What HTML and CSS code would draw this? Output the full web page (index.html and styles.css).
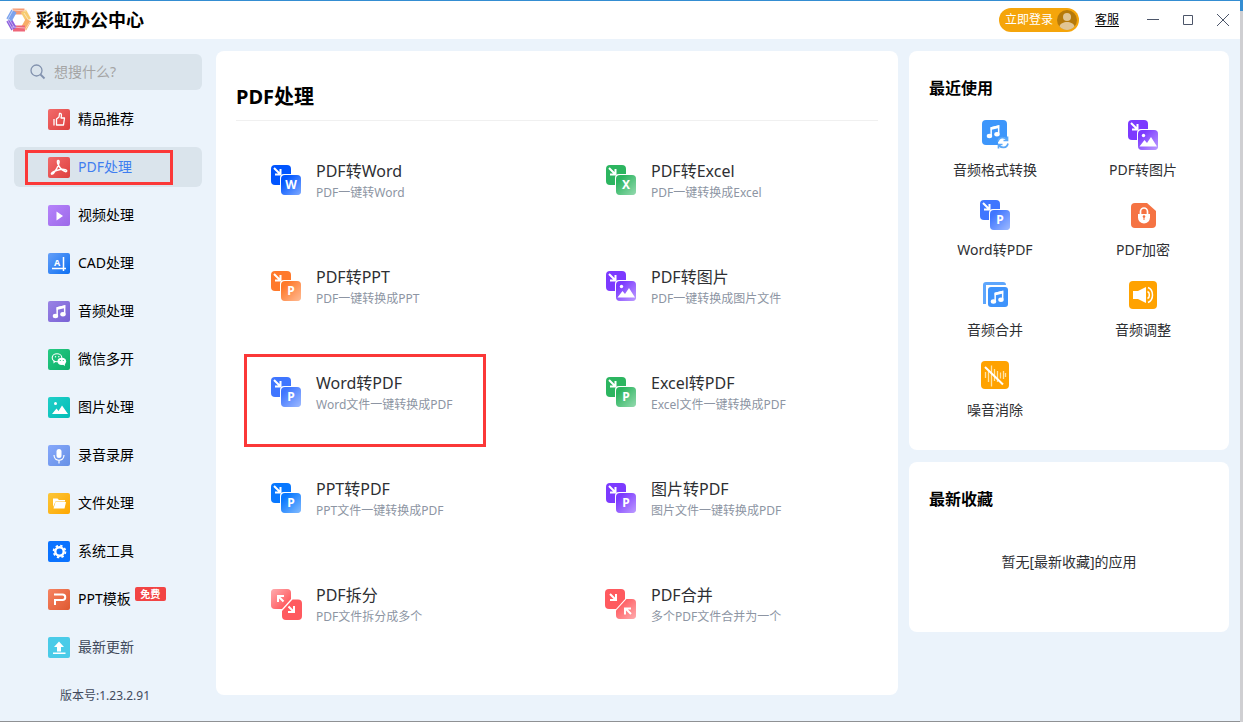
FILE: index.html
```html
<!DOCTYPE html>
<html lang="zh-CN">
<head>
    <meta charset="UTF-8">
    <title>彩虹办公中心</title>
    <link rel="stylesheet" href="styles.css">
</head>
<body>

<!-- shared icon parts -->
<svg class="defs" width="0" height="0">
    <defs>
        <linearGradient id="shine" x1="0" y1="0" x2="1" y2="1">
            <stop offset="0.2" stop-color="#fff" stop-opacity="0"/>
            <stop offset="1" stop-color="#fff" stop-opacity="0.5"/>
        </linearGradient>
        <linearGradient id="shine-back" x1="1" y1="1" x2="0" y2="0">
            <stop offset="0.2" stop-color="#fff" stop-opacity="0"/>
            <stop offset="1" stop-color="#fff" stop-opacity="0.5"/>
        </linearGradient>
        <symbol id="convert" viewBox="0 0 30 30">
            <rect width="20" height="20" rx="4" fill="currentColor"/>
            <path d="M3 3l6 6M9.500 4v5.500H4" fill="none" stroke="#fff" stroke-width="2"/>
            <rect x="9" y="9" width="22" height="22" rx="4" fill="#fff"/>
            <rect x="10" y="10" width="20" height="20" rx="4" fill="currentColor"/>
            <rect x="10" y="10" width="20" height="20" rx="4" fill="url(#shine)"/>
        </symbol>
        <symbol id="picture" viewBox="0 0 30 30">
            <circle cx="15.500" cy="15.500" r="1.700" fill="#fff"/>
            <path d="M11.500 26.500l5-6.500 2.500 3 4-6 6 9.500z" fill="#fff"/>
        </symbol>
        <symbol id="note" viewBox="0 0 16 16">
            <path d="M5.500 12V4l8-2v8.500" fill="none" stroke="#fff" stroke-width="1.600"/>
            <path d="M5 3.500l9-2.300v3L5 6.400z" fill="#fff"/>
            <ellipse cx="3.700" cy="12.700" rx="2.900" ry="2.400" fill="#fff"/>
            <ellipse cx="11.700" cy="11" rx="2.900" ry="2.400" fill="#fff"/>
        </symbol>
    </defs>
</svg>

<div class="window">
    <header class="titlebar">
        <svg class="logo" width="26" height="24" viewBox="0 0 26 24" fill="none" stroke-width="6">
            <path d="M6.500 3.500h12" stroke="#f49a72"/>
            <path d="M17.500 3l5 9" stroke="#f7cb70"/>
            <path d="M22.500 12l-5 9" stroke="#f8ad68"/>
            <path d="M19 20.500H7" stroke="#ee6678"/>
            <path d="M8 21l-5-9" stroke="#8d5fdd"/>
            <path d="M3 12l5-9" stroke="#7ba2ed"/>
            <path d="M6 2l14 1M20.500 2l5 9M18 5l4.500 7M24 14l-5 8M6 19l13 1M2 13l5 9M3 11l5 8M7 2l-5 9" stroke="#fff" stroke-width="0.500"/>
        </svg>
        <h1>彩虹办公中心</h1>
        <button class="login">立即登录
            <svg width="20" height="20" viewBox="0 0 20 20">
                <circle cx="10" cy="10" r="10" fill="#b67a0b"/>
                <circle cx="10" cy="7" r="4" fill="#e1c594"/>
                <path d="M2.500 16.500C3.500 10.500 16.500 10.500 17.500 16.500A10 10 0 0 1 2.500 16.500z" fill="#e1c594"/>
            </svg>
        </button>
        <a class="service" href="#">客服</a>
        <div class="controls">
            <button aria-label="最小化"><svg width="14" height="14" viewBox="0 0 14 14"><path d="M1 6.500h12"/></svg></button>
            <button aria-label="最大化"><svg width="14" height="14" viewBox="0 0 14 14"><path d="M2.500 2.500h9v9h-9z"/></svg></button>
            <button aria-label="关闭"><svg width="14" height="14" viewBox="0 0 14 14"><path d="M1 1l12 12M13 1L1 13"/></svg></button>
        </div>
    </header>

    <div class="content">
        <aside class="sidebar">
            <label class="search">
                <svg width="16" height="16" viewBox="0 0 16 16" fill="none" stroke="#8292ae" stroke-width="1.300">
                    <circle cx="6.500" cy="6.500" r="5.500"/>
                    <path d="M10.500 10.500l4 4" stroke-width="1.800"/>
                </svg>
                <input type="text" placeholder="想搜什么?" aria-label="搜索">
            </label>

            <nav>
                <a href="#">
                    <svg class="red" viewBox="0 0 22 21"><path d="M6 10v6.500M8.500 16V10l2.500-2 .500-3.500c1.800-.500 2.500 1 1.500 4.500h3.500l-1 7H8.500z" fill="none" stroke="#fff" stroke-width="1.300" stroke-linejoin="round"/></svg>
                    精品推荐
                </a>
                <a href="#" class="active marked">
                    <svg class="red" viewBox="0 0 22 21"><path d="M10 3.500c2-.5 1 4-1 7.500S4.500 18 3.500 17c-1-1.500 5-4 9-4.500s7 .5 6 1.800c-1 1.200-5-1.300-7-4.300s-2.800-6-1.500-6.500z" fill="none" stroke="#fff" stroke-width="1.500"/></svg>
                    PDF处理
                </a>
                <a href="#">
                    <svg class="violet" viewBox="0 0 22 21"><path d="M8.500 6.500v9l6.500-4.500z" fill="#fff"/></svg>
                    视频处理
                </a>
                <a href="#">
                    <svg class="blue" viewBox="0 0 22 21"><path d="M15.500 4v14M4 15.500h14" fill="none" stroke="#fff" stroke-width="1.500"/><text class="letter" x="9" y="13">A</text></svg>
                    CAD处理
                </a>
                <a href="#">
                    <svg class="purple" viewBox="0 0 22 21"><use href="#note" x="4" y="3" width="15" height="15"/></svg>
                    音频处理
                </a>
                <a href="#">
                    <svg class="green" viewBox="0 0 22 21">
                        <ellipse cx="9" cy="8.800" rx="4.800" ry="4" fill="none" stroke="#fff" stroke-width="1.100"/>
                        <path d="M5.500 11.500v3l2.500-2z" fill="#fff"/>
                        <circle cx="7.500" cy="7.800" r=".7" fill="#fff"/><circle cx="10.800" cy="7.800" r=".7" fill="#fff"/>
                        <ellipse cx="13.800" cy="12.300" rx="4.300" ry="3.600" fill="#fff"/>
                        <path d="M14 15l3 2-.3-3z" fill="#fff"/>
                        <circle cx="12.300" cy="11.500" r=".6" fill="#18b974"/><circle cx="15.300" cy="11.500" r=".6" fill="#18b974"/>
                    </svg>
                    微信多开
                </a>
                <a href="#">
                    <svg class="teal" viewBox="0 0 22 21"><circle cx="7.500" cy="6.500" r="1.500" fill="#fff"/><path d="M4 17l4.500-5.500 2 2.500 3.500-5.500L20 17z" fill="#fff"/></svg>
                    图片处理
                </a>
                <a href="#">
                    <svg class="periwinkle" viewBox="0 0 22 21"><rect x="8.500" y="4" width="5" height="9" rx="2.500" fill="#fff"/><path d="M6 10c0 7 10 7 10 0M11 15v3.500" fill="none" stroke="#fff" stroke-width="1.200"/></svg>
                    录音录屏
                </a>
                <a href="#">
                    <svg class="yellow" viewBox="0 0 22 21"><path d="M5 14V5.500h4.500l1.500 1.500h6v1.500H7.500z" fill="#fff"/><path d="M7.500 9H18l-1.500 6.500H5.500z" fill="#fff"/></svg>
                    文件处理
                </a>
                <a href="#">
                    <svg class="royal" viewBox="0 0 22 21"><circle cx="11.500" cy="10.500" r="4.200" fill="none" stroke="#fff" stroke-width="2.400"/><circle cx="11.500" cy="10.500" r="5.900" fill="none" stroke="#fff" stroke-width="1.800" stroke-dasharray="2.400 2.230"/></svg>
                    系统工具
                </a>
                <a href="#">
                    <svg class="orange" viewBox="0 0 22 21"><path d="M6 5.500h8.500a2.500 2.500 0 0 1 0 5.500H7v5" fill="none" stroke="#fff" stroke-width="2"/></svg>
                    PPT模板
                    <span class="free">免费</span>
                </a>
                <a href="#" class="update">
                    <svg class="cyan" viewBox="0 0 22 21"><path d="M11 4.500l5 5.500h-3v4.500H9V10H6zM5 15.500h12.500V17H5z" fill="#fff"/></svg>
                    最新更新
                </a>
            </nav>
            <p class="version">版本号:1.23.2.91</p>
        </aside>

        <main class="panel">
            <h2>PDF处理</h2>
            <div class="tools">
                <a href="#" class="tool">
                    <svg viewBox="0 0 30 30" color="#0055ff"><use href="#convert"/><text x="20" y="24">W</text></svg>
                    <div><h3>PDF转Word</h3><p>PDF一键转Word</p></div>
                </a>
                <a href="#" class="tool">
                    <svg viewBox="0 0 30 30" color="#2cb560"><use href="#convert"/><text x="20" y="24">X</text></svg>
                    <div><h3>PDF转Excel</h3><p>PDF一键转换成Excel</p></div>
                </a>
                <a href="#" class="tool">
                    <svg viewBox="0 0 30 30" color="#ff792b"><use href="#convert"/><text x="20" y="24">P</text></svg>
                    <div><h3>PDF转PPT</h3><p>PDF一键转换成PPT</p></div>
                </a>
                <a href="#" class="tool">
                    <svg viewBox="0 0 30 30" color="#7c3aff"><use href="#convert"/><use href="#picture"/></svg>
                    <div><h3>PDF转图片</h3><p>PDF一键转换成图片文件</p></div>
                </a>
                <a href="#" class="tool marked">
                    <svg viewBox="0 0 30 30" color="#3f76ff"><use href="#convert"/><text x="20" y="24">P</text></svg>
                    <div><h3>Word转PDF</h3><p>Word文件一键转换成PDF</p></div>
                </a>
                <a href="#" class="tool">
                    <svg viewBox="0 0 30 30" color="#2cb560"><use href="#convert"/><text x="20" y="24">P</text></svg>
                    <div><h3>Excel转PDF</h3><p>Excel文件一键转换成PDF</p></div>
                </a>
                <a href="#" class="tool">
                    <svg viewBox="0 0 30 30" color="#0878ff"><use href="#convert"/><text x="20" y="24">P</text></svg>
                    <div><h3>PPT转PDF</h3><p>PPT文件一键转换成PDF</p></div>
                </a>
                <a href="#" class="tool">
                    <svg viewBox="0 0 30 30" color="#7c3aff"><use href="#convert"/><text x="20" y="24">P</text></svg>
                    <div><h3>图片转PDF</h3><p>图片文件一键转换成PDF</p></div>
                </a>
                <a href="#" class="tool">
                    <svg viewBox="0 0 30 30" color="#ff5a5f">
                        <path d="M4 0h12a4 4 0 0 1 4 4v6l-9 10H4a4 4 0 0 1-4-4V4a4 4 0 0 1 4-4z" fill="currentColor"/>
                        <path d="M4 0h12a4 4 0 0 1 4 4v6l-9 10H4a4 4 0 0 1-4-4V4a4 4 0 0 1 4-4z" fill="url(#shine-back)"/>
                        <path d="M21.500 10.500H27a4 4 0 0 1 4 4V27a4 4 0 0 1-4 4H15a4 4 0 0 1-4-4v-5z" fill="currentColor"/>
                        <path d="M12.500 12.500l-5-5M7 13V7h6M17.500 17.500l5 5M23 17v6h-6" fill="none" stroke="#fff" stroke-width="2"/>
                    </svg>
                    <div><h3>PDF拆分</h3><p>PDF文件拆分成多个</p></div>
                </a>
                <a href="#" class="tool">
                    <svg viewBox="0 0 30 30" color="#ff5a5f">
                        <path d="M3 0h12a4 4 0 0 1 4 4v6l-9 10H3a4 4 0 0 1-4-4V4a4 4 0 0 1 4-4z" fill="currentColor"/>
                        <path d="M20.500 10H26a4 4 0 0 1 4 4v12a4 4 0 0 1-4 4H14a4 4 0 0 1-4-4v-4.500z" fill="currentColor"/>
                        <path d="M20.500 10H26a4 4 0 0 1 4 4v12a4 4 0 0 1-4 4H14a4 4 0 0 1-4-4v-4.500z" fill="url(#shine)"/>
                        <path d="M4 5l5 5M10 5v6H4M25 25l-5-5M19 25.500v-6h6" fill="none" stroke="#fff" stroke-width="2"/>
                    </svg>
                    <div><h3>PDF合并</h3><p>多个PDF文件合并为一个</p></div>
                </a>
            </div>
        </main>

        <aside class="side">
            <section class="panel recent">
                <h2>最近使用</h2>
                <div class="apps">
                    <a href="#">
                        <svg viewBox="0 0 30 30">
                            <rect x="2" y="0" width="25" height="25" rx="4" fill="#3d96fb"/>
                            <use href="#note" x="6" y="4" width="15" height="15"/>
                            <circle cx="23" cy="22.500" r="5" fill="#fff"/>
                            <path d="M18 21.500c1-5 7-5 9-1.500M28 23.500c-1 5-7 5-9 1.500M27.500 16.500V20.500h-4M18.500 28.500v-4h4" fill="none" stroke="#5ba8f8" stroke-width="1.700"/>
                        </svg>
                        音频格式转换
                    </a>
                    <a href="#">
                        <svg viewBox="0 0 30 30" color="#7c3aff"><use href="#convert"/><use href="#picture"/></svg>
                        PDF转图片
                    </a>
                    <a href="#">
                        <svg viewBox="0 0 30 30" color="#3f76ff"><use href="#convert"/><text x="20" y="24">P</text></svg>
                        Word转PDF
                    </a>
                    <a href="#">
                        <svg viewBox="0 0 30 30">
                            <path d="M7 3h12l9 8v13a4 4 0 0 1-4 4H7a4 4 0 0 1-4-4V7a4 4 0 0 1 4-4z" fill="#f57343"/>
                            <path d="M12.500 14v-2.500a3.500 3.500 0 0 1 7 0V14" fill="none" stroke="#fff" stroke-width="1.700"/>
                            <path d="M10 14h12v3.500a6 6 0 0 1-12 0z" fill="#fff"/>
                            <circle cx="16" cy="16.500" r="1.300" fill="#f57343"/><path d="M15.500 17h1v3h-1z" fill="#f57343"/>
                        </svg>
                        PDF加密
                    </a>
                    <a href="#">
                        <svg viewBox="0 0 30 30">
                            <path d="M3 24V5a3 3 0 0 1 3-3h17a3 3 0 0 1 3 3H6v19z" fill="#5ea6fc"/>
                            <rect x="8" y="7" width="20" height="20" rx="3" fill="#3e93fb"/>
                            <use href="#note" x="10" y="9.500" width="15" height="15"/>
                        </svg>
                        音频合并
                    </a>
                    <a href="#">
                        <svg viewBox="0 0 30 30">
                            <rect x="1" y="1" width="28" height="28" rx="4" fill="#ffa200"/>
                            <path d="M5 11h5l8-4v16l-8-4H5z" fill="#fff"/>
                            <path d="M19.500 11.500c2.500 1 2.500 6 0 7" fill="none" stroke="#fff" stroke-width="1.500"/>
                            <path d="M20 7.500c6 2.500 6 12.500 0 15" fill="none" stroke="#fff" stroke-width="1.500"/>
                        </svg>
                        音频调整
                    </a>
                    <a href="#">
                        <svg viewBox="0 0 30 30">
                            <rect x="1" y="1" width="28" height="28" rx="4" fill="#ffa200"/>
                            <path d="M5.500 12v6M8.500 10v12M11.500 5.500v21M14.500 9v12M17.500 11v11M20.500 12.500v6M23.500 11v8M25.500 13v4" fill="none" stroke="#ffe3a6" stroke-width="1.300"/>
                            <path d="M5 7l18 17.500" stroke="#fff" stroke-width="2"/>
                        </svg>
                        噪音消除
                    </a>
                </div>
            </section>

            <section class="panel favorites">
                <h2>最新收藏</h2>
                <p>暂无[最新收藏]的应用</p>
            </section>
        </aside>
    </div>
</div>

</body>
</html>
```
FILE: styles.css
```css
* {
    box-sizing: border-box;
}

body {
    margin: 0;
    padding-right: 3px;
    background: #cfcfd2 linear-gradient(#348dd2 11px, #cfcfd2 11px) no-repeat;
    font-family: "Noto Sans", "Noto Sans CJK SC", sans-serif;
    font-size: 14px;
    line-height: 20px;
    color: #000;
}

h1, h2, h3, p {
    margin: 0;
}

a {
    color: inherit;
    text-decoration: none;
}

button {
    padding: 0;
    border: 0;
    background: none;
    font: inherit;
    cursor: pointer;
}

svg {
    flex: none;
    overflow: visible;
}

svg text {
    fill: #fff;
    font-size: 12px;
    font-weight: bold;
    text-anchor: middle;
}

svg .letter {
    font-size: 9px;
}

.defs {
    position: absolute;
}

.window {
    min-height: 100vh;
    border-top: 1px solid #348dd2;
    border-bottom: 1px solid #8f9194;
    background-color: #ebf3fb;
}

/* title bar */
.titlebar {
    display: flex;
    align-items: center;
    height: 38px;
    padding: 0 10px 0 6px;
    background-color: #fff;
}

.titlebar h1 {
    margin: 0 auto 0 4px;
    font-size: 18px;
    line-height: 24px;
}

.login {
    display: flex;
    align-items: center;
    justify-content: space-between;
    width: 80px;
    height: 24px;
    padding: 0 2px 0 6px;
    border-radius: 12px;
    background-color: #f5a50b;
    color: #fff;
    font-size: 12px;
}

.service {
    margin: 0 27px 0 16px;
    font-size: 12px;
    text-decoration: underline;
    text-underline-offset: 2px;
}

.controls {
    display: flex;
    gap: 21px;
}

.controls button {
    display: flex;
}

.controls path {
    fill: none;
    stroke: #4c5569;
}

/* columns */
.content {
    display: flex;
    align-items: flex-start;
    padding: 12px 11px 0 14px;
}

.sidebar {
    width: 188px;
    margin: 3px 14px 0 0;
}

.search {
    display: flex;
    align-items: center;
    gap: 8px;
    height: 36px;
    margin-bottom: 9px;
    padding: 0 16px;
    border-radius: 6px;
    background-color: #dae4ec;
}

.search input {
    flex: 1;
    min-width: 0;
    padding: 0;
    border: 0;
    outline: 0;
    background: none;
    font: inherit;
}

.search input::placeholder {
    color: #a5a5a5;
}

nav {
    display: flex;
    flex-direction: column;
    gap: 8px;
}

nav a {
    display: flex;
    align-items: center;
    position: relative;
    height: 40px;
    padding-left: 34px;
    border-radius: 6px;
    line-height: 22px;
}

nav svg {
    width: 22px;
    height: 21px;
    margin-right: 8px;
    border-radius: 2px;
}

nav .active {
    background-color: #dae4ec;
    color: #3f7ef0;
}

nav .update, .version {
    color: #414a5c;
}

.red { background: linear-gradient(135deg, #f26b6b, #de3f3d); }
.violet { background: linear-gradient(135deg, #b683fb, #9c69e8); }
.blue { background: linear-gradient(135deg, #659ff8, #0c6ff2); }
.purple { background: linear-gradient(135deg, #9a83e5, #7861d5); }
.green { background: linear-gradient(135deg, #26cb84, #0eae68); }
.teal { background: linear-gradient(135deg, #20cfc8, #02bdb7); }
.periwinkle { background: linear-gradient(135deg, #86a8fb, #6791e6); }
.yellow { background: linear-gradient(135deg, #fbc63a, #ffa700); }
.royal { background: #0a72ff; }
.orange { background: linear-gradient(135deg, #f68362, #df5930); }
.cyan { background: #4acbe8; }

.free {
    align-self: flex-start;
    width: 31px;
    height: 14px;
    margin: 8px 0 0 4px;
    border-radius: 2px;
    background-color: #f24444;
    color: #fff;
    font-size: 10px;
    font-weight: bold;
    line-height: 14px;
    text-align: center;
}

.version {
    margin-top: 19px;
    padding-left: 46px;
    font-size: 12px;
}

/* red frames round the highlighted entries */
.marked::after {
    content: "";
    position: absolute;
    box-sizing: border-box;
    border: 3px solid #fb3838;
}

nav .marked::after {
    top: 3px;
    left: 11px;
    width: 148px;
    height: 35px;
}

.tool.marked::after {
    top: 0;
    left: 8px;
    width: 242px;
    height: 93px;
}

.panel {
    border-radius: 8px;
    background-color: #fff;
}

main {
    flex: 1;
    padding: 31px 20px 36px;
}

main h2 {
    padding-bottom: 8px;
    border-bottom: 1px solid #f0f0f0;
    font-size: 20px;
    line-height: 30px;
}

.tools {
    display: grid;
    grid-template-columns: 1fr 1fr;
    gap: 13px 28px;
    margin-top: 21px;
}

.tool {
    display: flex;
    gap: 15px;
    position: relative;
    height: 93px;
    padding: 17px 0 0 35px;
}

.tool svg {
    width: 30px;
    height: 30px;
    margin-top: 6px;
}

.tool h3 {
    color: #2e2f33;
    font-size: 16px;
    font-weight: normal;
    line-height: 24px;
}

.tool p {
    color: #8d95a3;
    font-size: 12px;
}

/* right column */
.side {
    display: flex;
    flex-direction: column;
    gap: 12px;
    width: 320px;
    margin-left: 11px;
}

.side h2 {
    padding-left: 8px;
    font-size: 16px;
    line-height: 24px;
}

.recent {
    padding: 25px 12px 15px;
}

.apps {
    display: grid;
    grid-template-columns: 1fr 1fr;
    margin-top: 15px;
    color: #2e2f33;
}

.apps a {
    display: flex;
    flex-direction: column;
    align-items: center;
    gap: 10px;
    height: 80px;
    padding-top: 5px;
}

.apps svg {
    width: 30px;
    height: 30px;
}

.favorites {
    height: 170px;
    padding: 25px 12px;
}

.favorites p {
    margin-top: 41px;
    color: #2e2f33;
    text-align: center;
}
```
